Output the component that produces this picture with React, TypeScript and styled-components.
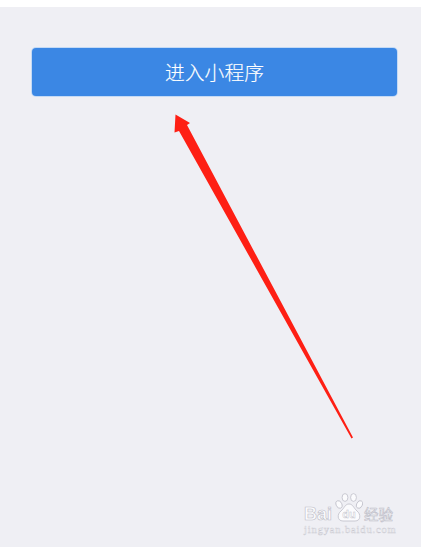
import React from "react";
import styled, { createGlobalStyle } from "styled-components";

const GlobalStyle = createGlobalStyle`
  html, body {
    margin: 0;
    padding: 0;
    background: #fff;
    overflow: hidden;
  }
`;

const Screen = styled.div`
  position: relative;
  display: flex;
  flex-direction: column;
  width: 421px;
  height: 547px;
  padding-top: 7px;
  box-sizing: border-box;
  background: #fff;
`;

const Panel = styled.main`
  flex: 1;
  padding: 41px 24px 0 32px;
  background: #efeff4;
`;

const EnterButton = styled.button`
  display: block;
  width: 100%;
  height: 48px;
  padding: 0;
  border: 0;
  border-radius: 4px;
  background: #3b87e4;
  box-shadow: 0 0 0 1px #c4daf5;
  color: #fff;
  font-family: "Noto Sans CJK SC", "Liberation Sans", sans-serif;
  font-size: 19.8px;
  font-weight: 300;
  line-height: 48px;
  -webkit-text-stroke: 0.15px #fff;
`;

const ArrowOverlay = styled.svg`
  position: absolute;
  left: 0;
  top: 0;
  pointer-events: none;
`;

const Watermark = styled.div`
  position: absolute;
  left: 304px;
  top: 493px;
  display: flex;
  flex-direction: column;
  gap: 3px;
  width: 90px;
  color: #fbfbfd;
`;

const LogoRow = styled.div`
  display: flex;
  align-items: flex-end;
  height: 29px;
  font-family: "Liberation Sans", sans-serif;
  -webkit-text-stroke: 0.6px #bebec8;
`;

const LogoWord = styled.span`
  width: 31px;
  font-size: 18px;
  font-weight: 700;
  line-height: 16px;
`;

const PawBadge = styled.div`
  position: relative;
  width: 28px;
  height: 29px;
`;

const LogoDu = styled.span`
  position: absolute;
  left: 0;
  right: 0;
  bottom: 2px;
  font-size: 11px;
  font-weight: 700;
  line-height: 12px;
  text-align: center;
  -webkit-text-stroke: 0.4px #bebec8;
`;

const LogoCn = styled.span`
  margin-left: 1px;
  font-family: "Noto Sans CJK SC", sans-serif;
  font-size: 14.5px;
  line-height: 17px;
`;

const Domain = styled.div`
  font-family: "Liberation Serif", serif;
  font-size: 10.5px;
  line-height: 10px;
  letter-spacing: 0.85px;
  white-space: nowrap;
  -webkit-text-stroke: 0.4px #c8c8d0;
`;

export default function App() {
  return (
    <>
      <GlobalStyle />
      <Screen>
        <Panel>
          <EnterButton>进入小程序</EnterButton>
        </Panel>
        <ArrowOverlay width="421" height="547" viewBox="0 0 421 547">
          <path
            d="M175.5 114.5 L190 123 L187 125 L353 437.5 L351.5 438.5 L179 131 L174.5 132.5 Z"
            fill="#fe1f14"
          />
        </ArrowOverlay>
        <Watermark>
          <LogoRow>
            <LogoWord>Bai</LogoWord>
            <PawBadge>
              <svg width="28" height="29" viewBox="0 0 28 29">
                <g fill="#fbfbfd" stroke="#bebec8" strokeWidth="0.8">
                  <ellipse cx="4" cy="11.5" rx="2.8" ry="4" transform="rotate(-25 4 11.5)" />
                  <ellipse cx="10" cy="4.5" rx="2.9" ry="3.9" />
                  <ellipse cx="18.5" cy="4.5" rx="2.9" ry="3.9" />
                  <ellipse cx="24.5" cy="11.5" rx="2.8" ry="4" transform="rotate(25 24.5 11.5)" />
                  <path d="M14 11 C10 11 9.5 15 6 18 C2 21 2 28 8 28 L20 28 C26 28 26 21 22 18 C18.5 15 18 11 14 11 Z" />
                </g>
              </svg>
              <LogoDu>du</LogoDu>
            </PawBadge>
            <LogoCn>经验</LogoCn>
          </LogoRow>
          <Domain>jingyan.baidu.com</Domain>
        </Watermark>
      </Screen>
    </>
  );
}
